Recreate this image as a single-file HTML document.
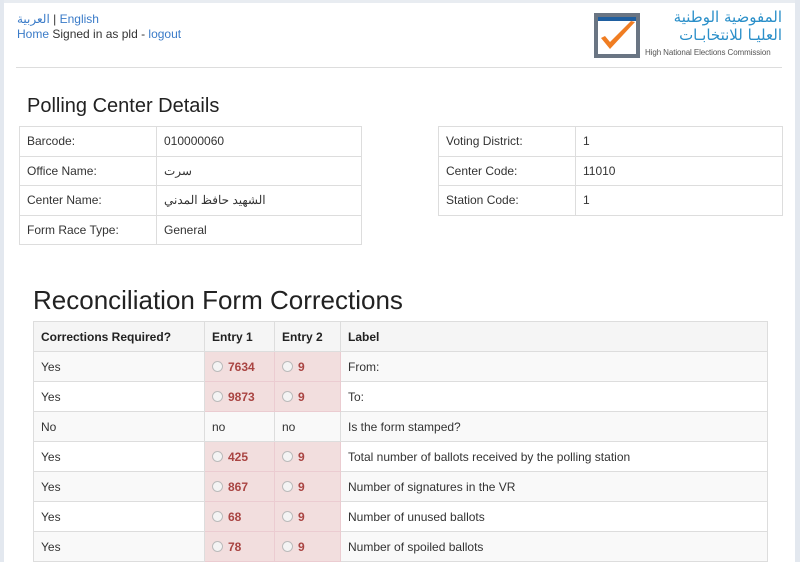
<!DOCTYPE html>
<html><head><meta charset="utf-8"><style>
body{margin:0;width:800px;height:562px;overflow:hidden;background:#fff;font-family:"Liberation Sans","Noto Sans CJK SC",sans-serif;font-size:12px;color:#333;position:relative}
.sl{position:absolute;left:0;top:0;width:4px;height:562px;background:#e3e8ef}
.sr{position:absolute;right:0;top:0;width:5px;height:562px;background:#e3e8ef}
.st{position:absolute;left:0;top:0;width:800px;height:3px;background:#e8ecf1}
a{color:#3a7bc8;text-decoration:none}
.top{position:absolute;left:17px;top:12px;line-height:15px;font-size:12px}
.hr{position:absolute;left:16px;top:67px;width:766px;height:1px;background:#ddd}
h2{position:absolute;margin:0;font-weight:normal;color:#222}
table{position:absolute;border-collapse:collapse}
td,th{border:1px solid #ddd;padding:0 7px;text-align:left;font-size:12px}
.d td{height:28.5px}
.r th,.r td{height:29px}
.r th{background:#f5f5f5;font-weight:bold;color:#222}
.r tr:nth-child(even) td{background:#f9f9f9}
.r td.e{background:#f2dede!important;border-color:#ebccd1;color:#a94442;font-weight:bold}
.rad{display:inline-block;width:9px;height:9px;border:1px solid #bbb;border-radius:50%;background:#f4f4f4;vertical-align:-1px;margin-right:5px}
</style></head><body>
<div class="st"></div><div class="sl"></div><div class="sr"></div>
<div class="top"><a href="#">العربية</a> | <a href="#">English</a><br><a href="#">Home</a> Signed in as pld - <a href="#">logout</a></div>
<svg style="position:absolute;left:593px;top:12px" width="48" height="47"><rect x="1" y="1" width="46" height="45" fill="#6a7583"/><rect x="5" y="5" width="38" height="37" fill="#fff"/><rect x="5" y="5" width="38" height="4" fill="#1f5fa0"/><path d="M8 26 L17 37 L42 10 L38 9 L17 30 L12 24 Z" fill="#f07d22"/></svg>
<div style="position:absolute;left:640px;top:8px;width:142px;text-align:right;color:#2a8fc9;font-size:15px;line-height:18px;font-family:'DejaVu Sans',sans-serif;white-space:nowrap" dir="rtl">المفوضية الوطنية<br>العليـا للانتخابـات</div>
<div style="position:absolute;left:645px;top:48px;font-size:8px;color:#555;white-space:nowrap;letter-spacing:-0.1px">High National Elections Commission</div>
<div class="hr"></div>
<h2 style="left:27px;top:95px;font-size:20px">Polling Center Details</h2>
<table class="d" style="left:19px;top:126px;width:343px">
<tr><td style="width:122px">Barcode:</td><td>010000060</td></tr>
<tr><td>Office Name:</td><td>سرت</td></tr>
<tr><td>Center Name:</td><td>الشهيد حافظ المدني</td></tr>
<tr><td>Form Race Type:</td><td>General</td></tr></table>
<table class="d" style="left:438px;top:126px;width:345px">
<tr><td style="width:122px">Voting District:</td><td>1</td></tr>
<tr><td>Center Code:</td><td>11010</td></tr>
<tr><td>Station Code:</td><td>1</td></tr></table>
<h2 style="left:33px;top:285px;font-size:26px">Reconciliation Form Corrections</h2>
<table class="r" style="left:33px;top:321px;width:735px">
<tr><th style="width:156px">Corrections Required?</th><th style="width:55px">Entry 1</th><th style="width:51px">Entry 2</th><th>Label</th></tr>
<tr><td>Yes</td><td class="e"><span class="rad"></span>7634</td><td class="e"><span class="rad"></span>9</td><td>From:</td></tr>
<tr><td>Yes</td><td class="e"><span class="rad"></span>9873</td><td class="e"><span class="rad"></span>9</td><td>To:</td></tr>
<tr><td>No</td><td>no</td><td>no</td><td>Is the form stamped?</td></tr>
<tr><td>Yes</td><td class="e"><span class="rad"></span>425</td><td class="e"><span class="rad"></span>9</td><td>Total number of ballots received by the polling station</td></tr>
<tr><td>Yes</td><td class="e"><span class="rad"></span>867</td><td class="e"><span class="rad"></span>9</td><td>Number of signatures in the VR</td></tr>
<tr><td>Yes</td><td class="e"><span class="rad"></span>68</td><td class="e"><span class="rad"></span>9</td><td>Number of unused ballots</td></tr>
<tr><td>Yes</td><td class="e"><span class="rad"></span>78</td><td class="e"><span class="rad"></span>9</td><td>Number of spoiled ballots</td></tr>
</table>
</body></html>
